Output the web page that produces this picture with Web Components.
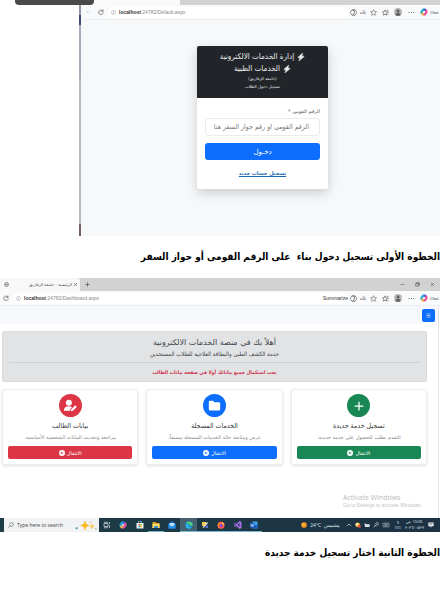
<!DOCTYPE html>
<html lang="ar">
<head>
<meta charset="utf-8">
<title>خطوات التسجيل</title>
<style>
body { margin: 0; background: #fff; font-family: "DejaVu Sans", "Liberation Sans", sans-serif; color: #212529; --narrow: "DejaVu Sans Condensed", "DejaVu Sans", sans-serif; }
</style>
</head>
<body>
<guide-page></guide-page>
<script>
const ICONS = {
  back: '<path d="M14 8H2M7 3 2 8l5 5" fill="none" stroke="currentColor"/>',
  reload: '<path d="M13 5.500A6 6 0 1 0 14 9M13.500 1.500v4.500H9" fill="none" stroke="currentColor" stroke-width="1.800"/>',
  info: '<circle cx="8" cy="8" r="6.500" fill="none" stroke="currentColor" stroke-width="1.300"/><path d="M8 7v5M8 4v1.500" stroke="currentColor" stroke-width="1.500"/>',
  sum: '<path d="M8 1.500a4 4 0 0 0-5 3 4 4 0 0 0 0 7 4 4 0 0 0 5 3 4 4 0 0 0 5-3 4 4 0 0 0 0-7 4 4 0 0 0-5-3z" fill="none" stroke="currentColor" stroke-width="1.600"/><path d="M6 3.500h3q2 0 1.500 2L9 11q-.5 2-2.500 2" fill="none" stroke="currentColor" stroke-width="1.800"/>',
  star: '<path d="m8 1.500 2 4.300 4.700.6-3.400 3.200.9 4.700L8 12l-4.200 2.300.9-4.700L1.300 6.400 6 5.800z" fill="none" stroke="currentColor" stroke-width="1.300"/>',
  favs: '<path d="m7 2 1.800 4 4.200.5-3 3 .8 4.500L7 12l-3.800 2 .8-4.500-3-3L5.200 6zM11 3h4M13 8h2M12 12h3" fill="none" stroke="currentColor" stroke-width="1.500"/>',
  person: '<circle cx="8" cy="8" r="8" fill="#bbb"/><circle cx="8" cy="6" r="3.300" fill="#666"/><path d="M2.500 14c0-6 11-6 11 0-3 2.600-8 2.600-11 0z" fill="#666"/>',
  dots: '<circle cx="2.500" cy="8" r="1.300" fill="currentColor"/><circle cx="8" cy="8" r="1.300" fill="currentColor"/><circle cx="13.500" cy="8" r="1.300" fill="currentColor"/>',
  copilot: '<path d="M5 1h5l2 5H7L4 13C1 13 0 10 1 7z" fill="#26a6d9"/><path d="M10 1c3 0 3 3 4 5l-4 1-2-4z" fill="#5b4fe0"/><path d="M11 15H6l-2-5h5l3-7c3 0 4 3 3 6z" fill="#e9569b"/><path d="M6 15c-3 0-3-3-4-5l4-1 2 4z" fill="#f5b52e"/><path d="m7 6 3 .3L9 10l-3-.3z" fill="#fff"/>',
  globe: '<circle cx="8" cy="8" r="6.500" fill="none" stroke="currentColor" stroke-width="1.500"/><path d="M2 8h12M8 2c-4 4-4 8 0 12 4-4 4-8 0-12z" fill="none" stroke="currentColor"/>',
  plus: '<path d="M8 1v14M1 8h14" stroke="currentColor" stroke-width="2"/>',
  x: '<path d="m3 3 10 10M13 3 3 13" stroke="currentColor" stroke-width="1.800"/>',
  min: '<path d="M2 8h12" stroke="currentColor" stroke-width="1.600"/>',
  restore: '<path d="M2 5h9v8H2zM5 5V2h9v8h-3" fill="none" stroke="currentColor" stroke-width="1.800"/>',
  bars: '<path d="M2 3h12M2 8h12M2 13h12" stroke="currentColor" stroke-width="1.800"/>',
  bolt: '<path d="M11.500 0 2 8.500c-.5.500-.3 1 .4 1h4L3.500 16 14 7.500c.5-.5.200-1.200-.4-1.200h-4z" fill="currentColor" stroke="currentColor"/>',
  folder: '<path d="M1 3.500Q1 2 2.500 2H6l2 2h5.500Q15 4 15 5.500v7q0 1.500-1.500 1.500h-11Q1 14 1 12.500z" fill="currentColor"/>',
  useredit: '<circle cx="6" cy="4.500" r="3.700" fill="currentColor"/><path d="M0 14.500C0 8 7 8.500 10 10l-2 2-.5 2.500z" fill="currentColor"/><path d="m8.500 15 .5-2.500 4.800-4.800 2 2L11 14.500z" fill="currentColor"/>',
  go: '<circle cx="8" cy="8" r="8" fill="#fff"/><path d="M12 8H5m3-3.500L4.500 8 8 11.500" fill="none" stroke="var(--tone)" stroke-width="2"/>',
  search: '<circle cx="9.500" cy="6.500" r="5" fill="none" stroke="currentColor" stroke-width="1.300"/><path d="m6 10-5 5" stroke="currentColor" stroke-width="1.500"/>',
  taskview: '<path d="M2 5h8v6H2zM2 2.500h8M2 13.500h8M13 2v4M13 8v6" fill="none" stroke="#cfd8dc" stroke-width="1.500"/>',
  store: '<path d="M1 4h14v11H1z" fill="#eef3f5"/><path d="M5 4V1h6v3" fill="none" stroke="#9fd3ee" stroke-width="1.300"/><path d="M5 6h3v3H5z" fill="#f15b2a"/><path d="M8.500 6h3v3h-3z" fill="#7fba00"/><path d="M5 9.500h3v3H5z" fill="#00a4ef"/><path d="M8.500 9.500h3v3h-3z" fill="#ffb900"/>',
  files: '<path d="M1 2h6l1 2h7v10H1z" fill="#e4a925"/><path d="M1 6h14v8H1z" fill="#ffdc6b"/><path d="M4 10h8v4H4z" fill="#3d8bd0"/>',
  mail: '<path d="m8 0 7 5v10H1V5z" fill="#1464c8"/><path d="M3 4h10v5l-5 3-5-3z" fill="#bfe5fb"/><path d="m1 6 7 5 7-5v9H1z" fill="#2b91ee"/>',
  edge: '<circle cx="8" cy="8" r="7.500" fill="#1479cf"/><path d="M1 6c3-8 14-6 14.500 1C15 11 10 11 9.500 9 10 6 5 4 1 6z" fill="#4fd07a"/><path d="M1 8c3-4 7-2 6 1 0 4 4 5 7 3-4 6-13 4-13-4z" fill="#35b7e8"/>',
  ssms: '<path d="M2 2h8v8H2z" fill="#f5d04c"/><path d="m3 14 9-12 2 2-9 10z" fill="#e8edf0"/><path d="M9 9h5v5H9z" fill="#5b72c7"/>',
  firefox: '<circle cx="8" cy="8.500" r="7" fill="#ff7a2b"/><path d="M9 1c5 2 7 6 5 10-4 5-10 3-11-1 3 2 8 0 5-3z" fill="#ff3c62"/><path d="M10 2c5 3 4 6 4 8-1-3-3-3-4-4z" fill="#ffd43d"/><circle cx="8" cy="9" r="2.800" fill="#7a4be0"/>',
  vs: '<path d="m11 0 4 2v12l-4 2-6-6-3 2-1-1V5l1-1 3 2zm0 4L7 8l4 4zM3 6v4l2-2z" fill="#a970e8" fill-rule="evenodd"/>',
  word: '<path d="M5 1h10v14H5z" fill="#41a5ee"/><path d="M5 8h10v7H5z" fill="#185abd"/><path d="M0 4h9v9H0z" fill="#1b5fc6"/><path d="m2 6 1 5 1.500-4L6 11l1-5" fill="none" stroke="#fff"/>',
  sun: '<circle cx="8" cy="8" r="7.500" fill="#f7941d"/><circle cx="7" cy="6.500" r="4" fill="#ffb638"/>',
  up: '<path d="m2 11 6-6 6 6" fill="none" stroke="currentColor" stroke-width="1.800"/>',
  alert: '<circle cx="7" cy="7" r="6" fill="#ffca3a"/><path d="M8 8h7v7H8z" fill="#e84a3f"/><path d="M2 4h6v4H2z" fill="#f5f5f5"/>',
  batt: '<path d="M1 4h3l2 2h9v7H3z" fill="currentColor"/>',
  link: '<path d="m2 14 5-5M7 4l5 5c3-3 3-6 1-7S8 2 7 4zM4 7l5 5" fill="none" stroke="currentColor" stroke-width="1.800"/>',
  keys: '<path d="M0 3h16v10H0zM3 6h10M3 8.500h10M5 11h6" fill="none" stroke="currentColor" stroke-width="1.200"/>',
  note: '<path d="M1 1h14v10h-5l-3 4v-4H1z" fill="#eef3f5"/><path d="M4 4h8M4 7h8" stroke="#1c3442"/>',
  spark: '<path d="M18 0c1 5 3 7 8 8-5 1-7 3-8 8-1-5-3-7-8-8 5-1 7-3 8-8z" fill="#f9b91c" stroke="#f9b91c"/><path d="M31 5c.5 3 2 4 4 4.500-2 .5-3.500 1.500-4 4.500-.5-3-2-4-4-4.500 2-.5 3.500-1.500 4-4.500z" fill="#fbc94a" stroke="#fbc94a"/><circle cx="3" cy="13" r="2" fill="#4a9ab0"/><circle cx="28" cy="2" r="1.300" fill="#d9a0a0"/><circle cx="38" cy="14" r="1.300" fill="#8ab56a"/>'
};

const define = (name, html, fill) => customElements.define(name, class extends HTMLElement {
  constructor() {
    super();
    this.attachShadow({ mode: 'open' }).innerHTML = html;
    if (fill) fill(this, this.shadowRoot);
  }
});

define('ui-icon', '', (el, root) => {
  const name = el.getAttribute('name');
  root.innerHTML = `<style>:host{display:inline-block;flex:none;width:8px;height:8px;line-height:0}svg{display:block;width:100%;height:100%}</style>
  <svg viewBox="0 0 ${name === 'spark' ? 40 : 16} 16" aria-hidden="true">${ICONS[name]}</svg>`;
});

define('browser-toolbar', '', (el, root) => {
  root.innerHTML = `
  <style>
    :host { display:flex; align-items:center; height:15px; background:#f9fafb; color:#555; font:5px "Liberation Sans","Noto Sans CJK JP",sans-serif; direction:ltr; border-bottom:1px solid #eceef0; box-sizing:border-box; }
    .nav { display:flex; gap:6px; padding:0 4px 0 3px; }
    .nav ui-icon { width:6px; height:6px; }
    .bar { flex:1; display:flex; align-items:center; gap:3px; background:#fff; height:11px; border-radius:5px; padding:0 0 0 3px; min-width:0; color:#888; }
    .bar ui-icon { width:5px; height:5px; }
    b { color:#333; }
    .sum { color:#333; margin-left:auto; }
    .tools { display:grid; grid-template-columns:10px 10px 10px 14px 12px 14px 12px; align-items:center; justify-items:center; }
    .tools span { font-size:4px; }
    ui-icon { width:7px; height:7px; }
    .tools ui-icon.big { width:8px; height:8px; }
    .chat { width:10px; font-size:4px; color:#333; }
  </style>
  <span class="nav">${el.hasAttribute('back') ? '<ui-icon name="back" style="opacity:.3"></ui-icon>' : ''}<ui-icon name="reload"></ui-icon></span>
  <div class="bar"><ui-icon name="info"></ui-icon><span><b>localhost</b>:24782/${el.getAttribute('page')}</span><span class="sum">${el.hasAttribute('summarize') ? 'Summarize' : ''}</span></div>
  <div class="tools"><ui-icon name="sum"></ui-icon><span>aあ</span><ui-icon name="star"></ui-icon><ui-icon name="favs"></ui-icon><ui-icon class="big" name="person"></ui-icon><ui-icon name="dots"></ui-icon><ui-icon class="big" name="copilot"></ui-icon></div>
  <span class="chat">Chat</span>`;
});

define('login-card', `
  <style>
    :host { display:block; width:131px; direction:rtl; background:#fff; border-radius:2px; overflow:hidden; box-shadow:0 4px 12px rgba(0,0,0,.18); }
    header { background:#212529; color:#eceeef; text-align:center; padding:5px 0 3px; height:52px; box-sizing:border-box; }
    h2 { margin:0; font:400 8px/12px var(--narrow); display:flex; justify-content:center; align-items:center; gap:3px; }
    header p { margin:0; font-size:4px; line-height:8px; }
    form { padding:9px 8px 12px; display:flex; flex-direction:column; }
    label { font-size:5px; line-height:8px; color:#555; margin-bottom:3px; }
    input { font:7px var(--narrow); height:18px; box-sizing:border-box; width:100%; border:1px solid #e9ecef; border-radius:3px; padding:0 10px 0 4px; margin:0 0 7px; background:#fff; }
    input::placeholder { color:#777; opacity:1; }
    button { font:7px "DejaVu Sans",sans-serif; height:17px; border:0; border-radius:3px; background:#0d6efd; color:#fff; padding:0; }
    a { color:#1668b5; font-size:5px; line-height:8px; text-align:center; margin-top:9px; font-weight:700; }
  </style>
  <header><h2><ui-icon name="bolt"></ui-icon>إدارة الخدمات الالكترونية</h2><h2><ui-icon name="bolt"></ui-icon>الخدمات الطبية</h2><p>(جامعة الزقازيق)</p><p>تسجيل دخول الطلاب</p></header>
  <form><label for="nid">الرقم القومى *</label><input id="nid" type="text" placeholder="الرقم القومى او رقم جواز السفر هنا"><button type="button">دخـول</button><a href="#register">تسجيل حساب جديد</a></form>`);

define('login-shot', `
  <style>
    :host { display:block; position:relative; margin-left:80px; padding-left:3px; height:236px; background:#f7f8fa; }
    .edge { position:absolute; left:-1px; top:0; width:2px; height:100%; background:linear-gradient(#9297a8 0 15px,#404674 15px 25px,#a9acb8 25px 33%,#b9babd 36% 95%,#755d61 95%); }
    .strip { height:5px; background:linear-gradient(90deg,#fafafa 97px,#d2d2d2 97px); }
    .tip { position:absolute; left:-65px; top:0; width:79px; height:5px; background:#4a4a4a; border-radius:0 0 4px 4px; }
    main { display:flex; justify-content:center; padding:26px 0 0 2px; background:#f7f8fa; }
  </style>
  <div class="strip"></div><browser-toolbar back page="Default.aspx"></browser-toolbar>
  <main><login-card></login-card></main><span class="edge"></span><span class="tip"></span>`);

define('step-title', `
  <style>:host{display:block;direction:rtl} h1{margin:0;font:700 10px/20px var(--narrow);color:#000;white-space:pre}</style>
  <h1><slot></slot></h1>`);

define('service-card', '', (el, root) => {
  root.innerHTML = `
  <style>
    :host { display:flex; flex-direction:column; align-items:stretch; flex:1; min-width:0; box-sizing:border-box; direction:rtl; text-align:center; background:#fff; border:1px solid #eee; border-radius:3px; padding:4px 5px 5px; box-shadow:0 1px 3px rgba(0,0,0,.12); }
    .disc { align-self:center; display:grid; place-items:center; width:23px; height:23px; border-radius:50%; background:var(--tone); color:#fff; }
    .disc ui-icon { width:13px; height:13px; }
    .disc ui-icon[name=plus] { width:10px; height:10px; }
    h3 { margin:4px 0 0; font:400 7px/11px var(--narrow); color:#333; }
    p { margin:0 0 4px; font-size:5px; line-height:10px; color:#888; white-space:nowrap; }
    button { display:flex; align-items:center; justify-content:center; gap:2px; height:13px; border:0; border-radius:2px; background:var(--tone); color:#fff; font:5px "DejaVu Sans",sans-serif; padding:0; }
    button ui-icon { width:6px; height:6px; }
  </style>
  <span class="disc"><ui-icon name="${el.getAttribute('icon')}"></ui-icon></span>
  <h3><slot name="title"></slot></h3><p><slot></slot></p>
  <button type="button">الانتقال<ui-icon name="go"></ui-icon></button>`;
});

define('task-bar', `
  <style>
    :host { display:flex; align-items:center; height:14px; background:linear-gradient(90deg,#1d3d47,#1c3144); color:#dfe6ea; font:5px "Open Sans","Noto Sans",sans-serif; direction:ltr; padding-left:4px; }
    label { display:flex; align-items:center; gap:3px; width:95px; height:14px; box-sizing:border-box; background:#f1f2f3; color:#444; padding:0 2px 0 4px; }
    input { border:0; background:none; font:5px "Open Sans","Noto Sans",sans-serif; padding:0; flex:1; min-width:0; height:12px; color:#444; }
    input::placeholder { color:#444; opacity:1; }
    label ui-icon { width:6px; height:6px; }
    label ui-icon[name=spark] { width:22px; height:9px; }
    .apps { display:flex; width:163px; }
    .apps span { flex:1; height:14px; display:grid; place-items:center; box-sizing:border-box; }
    .apps .on { border-bottom:1px solid #7bb8d8; }
    .apps .active { background:#45616d; }
    .tray { display:flex; align-items:center; margin-left:auto; gap:3px; padding-right:6px; }
    .tray ui-icon { width:6px; height:6px; }
    .weather { display:flex; align-items:center; gap:3px; margin-right:3px; }
    .two { display:grid; text-align:center; font-size:4px; line-height:6px; }
    .gap { margin-left:1px; }
  </style>
  <label><ui-icon name="search"></ui-icon><input type="text" aria-label="Type here to search" placeholder="Type here to search"><ui-icon name="spark"></ui-icon></label>
  <div class="apps"><span><ui-icon name="taskview"></ui-icon></span><span><ui-icon name="copilot"></ui-icon></span><span><ui-icon name="store"></ui-icon></span><span class="on"><ui-icon name="files"></ui-icon></span><span><ui-icon name="mail"></ui-icon></span><span class="on active"><ui-icon name="edge"></ui-icon></span><span class="on"><ui-icon name="ssms"></ui-icon></span><span class="on"><ui-icon name="firefox"></ui-icon></span><span class="on"><ui-icon name="vs"></ui-icon></span><span class="on"><ui-icon name="word"></ui-icon></span></div>
  <div class="tray"><span class="weather"><ui-icon name="sun"></ui-icon><span>24°C</span><span>مشمس</span></span><ui-icon name="up"></ui-icon><ui-icon name="alert"></ui-icon><ui-icon name="batt"></ui-icon><ui-icon name="link"></ui-icon><ui-icon name="keys" style="width:8px"></ui-icon><span class="two gap"><span>ع</span><span>101</span></span><span class="two gap"><span dir="rtl">10:06 ص</span><span>٢٠٢٦/٠٥/٢٩</span></span><ui-icon class="gap" name="note"></ui-icon></div>`);

define('dashboard-shot', `
  <style>
    :host { display:block; }
    .tabs { display:flex; align-items:center; height:13px; background:#d2d2d2; direction:ltr; color:#444; font:4px "DejaVu Sans",sans-serif; }
    .tab { display:flex; align-items:center; width:80px; height:13px; box-sizing:border-box; background:#f8f8f8; border-radius:0 3px 0 0; padding:0 2px 0 4px; gap:1px; }
    .tab span { margin-left:auto; }
    ui-icon { width:5px; height:5px; }
    .plus { margin-left:5px; }
    .win { margin-left:auto; display:flex; gap:10px; padding-right:5px; }
    .page { background:#fff; border-right:1px solid #e3e3e6; margin-right:1px; }
    nav { display:flex; justify-content:flex-end; align-items:center; height:18px; padding:0 3px; background:#f6f8fb; }
    nav button { display:grid; place-items:center; width:13px; height:13px; border:0; border-radius:2px; background:#0d6efd; color:#fff; padding:0; }
    .body { padding:7px 11px 0 2px; display:flex; flex-direction:column; gap:7px; }
    .hero { direction:rtl; text-align:center; background:#e2e3e5; border:1px solid #dadbdd; border-radius:2px; height:51px; box-sizing:border-box; padding:4px 6px 0; color:#41464b; }
    h2 { margin:0; font-size:8px; line-height:13px; font-weight:400; }
    .hero p { margin:0; font:6px/10px var(--narrow); }
    hr { border:0; border-top:1px solid #d0d1d3; margin:3px 0; }
    .hero .warn { color:#cf2e45; font:700 5px/13px var(--narrow); }
    .cards { direction:rtl; display:flex; gap:8px; }
    .mark { height:53px; padding:28px 13px 0 0; box-sizing:border-box; display:flex; flex-direction:column; align-items:flex-end; direction:ltr; font:5px/7px "Liberation Sans",sans-serif; color:#c4c4c4; }
    .mark div { width:82px; white-space:nowrap; }
    .mark .big { font:7px/9px "Open Sans","Noto Sans",sans-serif; color:#bbb; }
  </style>
  <div class="tabs"><div class="tab"><ui-icon name="globe"></ui-icon><span dir="rtl">الرئيسية - جامعة الزقازيق</span><ui-icon name="x"></ui-icon></div><ui-icon class="plus" name="plus"></ui-icon><div class="win"><ui-icon name="min"></ui-icon><ui-icon name="restore"></ui-icon><ui-icon name="x"></ui-icon></div></div>
  <browser-toolbar summarize page="Dashboard.aspx"></browser-toolbar>
  <div class="page">
    <nav><button type="button" aria-label="القائمة"><ui-icon name="bars"></ui-icon></button></nav>
    <div class="body">
      <section class="hero"><h2>أهلاً بك في منصة الخدمات الالكترونية</h2><p>خدمة الكشف الطبى والبطاقة العلاجية للطلاب المستجدين</p><hr><p class="warn">يجب استكمال جميع بياناتك أولا في صفحة بيانات الطالب</p></section>
      <div class="cards">
        <service-card icon="plus" style="--tone:#198754"><span slot="title">تسجيل خدمة جديدة</span>التقدم بطلب للحصول على خدمة جديدة.</service-card>
        <service-card icon="folder" style="--tone:#0d6efd"><span slot="title">الخدمات المسجلة</span>عرض ومتابعة حالة الخدمات المسجلة مسبقاً.</service-card>
        <service-card icon="useredit" style="--tone:#dc3545"><span slot="title">بيانات الطالب</span>مراجعة وتحديث البيانات الشخصية الأساسية.</service-card>
      </div>
    </div>
    <div class="mark"><div class="big">Activate Windows</div><div>Go to Settings to activate Windows.</div></div>
  </div>
  <task-bar></task-bar>`);

define('guide-page', `
  <style>
    :host { display:block; padding-right:4px; }
    step-title { padding:11px 0; }
  </style>
  <login-shot></login-shot>
  <step-title>الخطوة الأولى تسجيل دخول بناء  على الرقم القومى أو جواز السفر</step-title>
  <dashboard-shot></dashboard-shot>
  <step-title>الخطوة الثانية اختار تسجيل خدمة جديدة</step-title>`);
</script>
</body>
</html>
